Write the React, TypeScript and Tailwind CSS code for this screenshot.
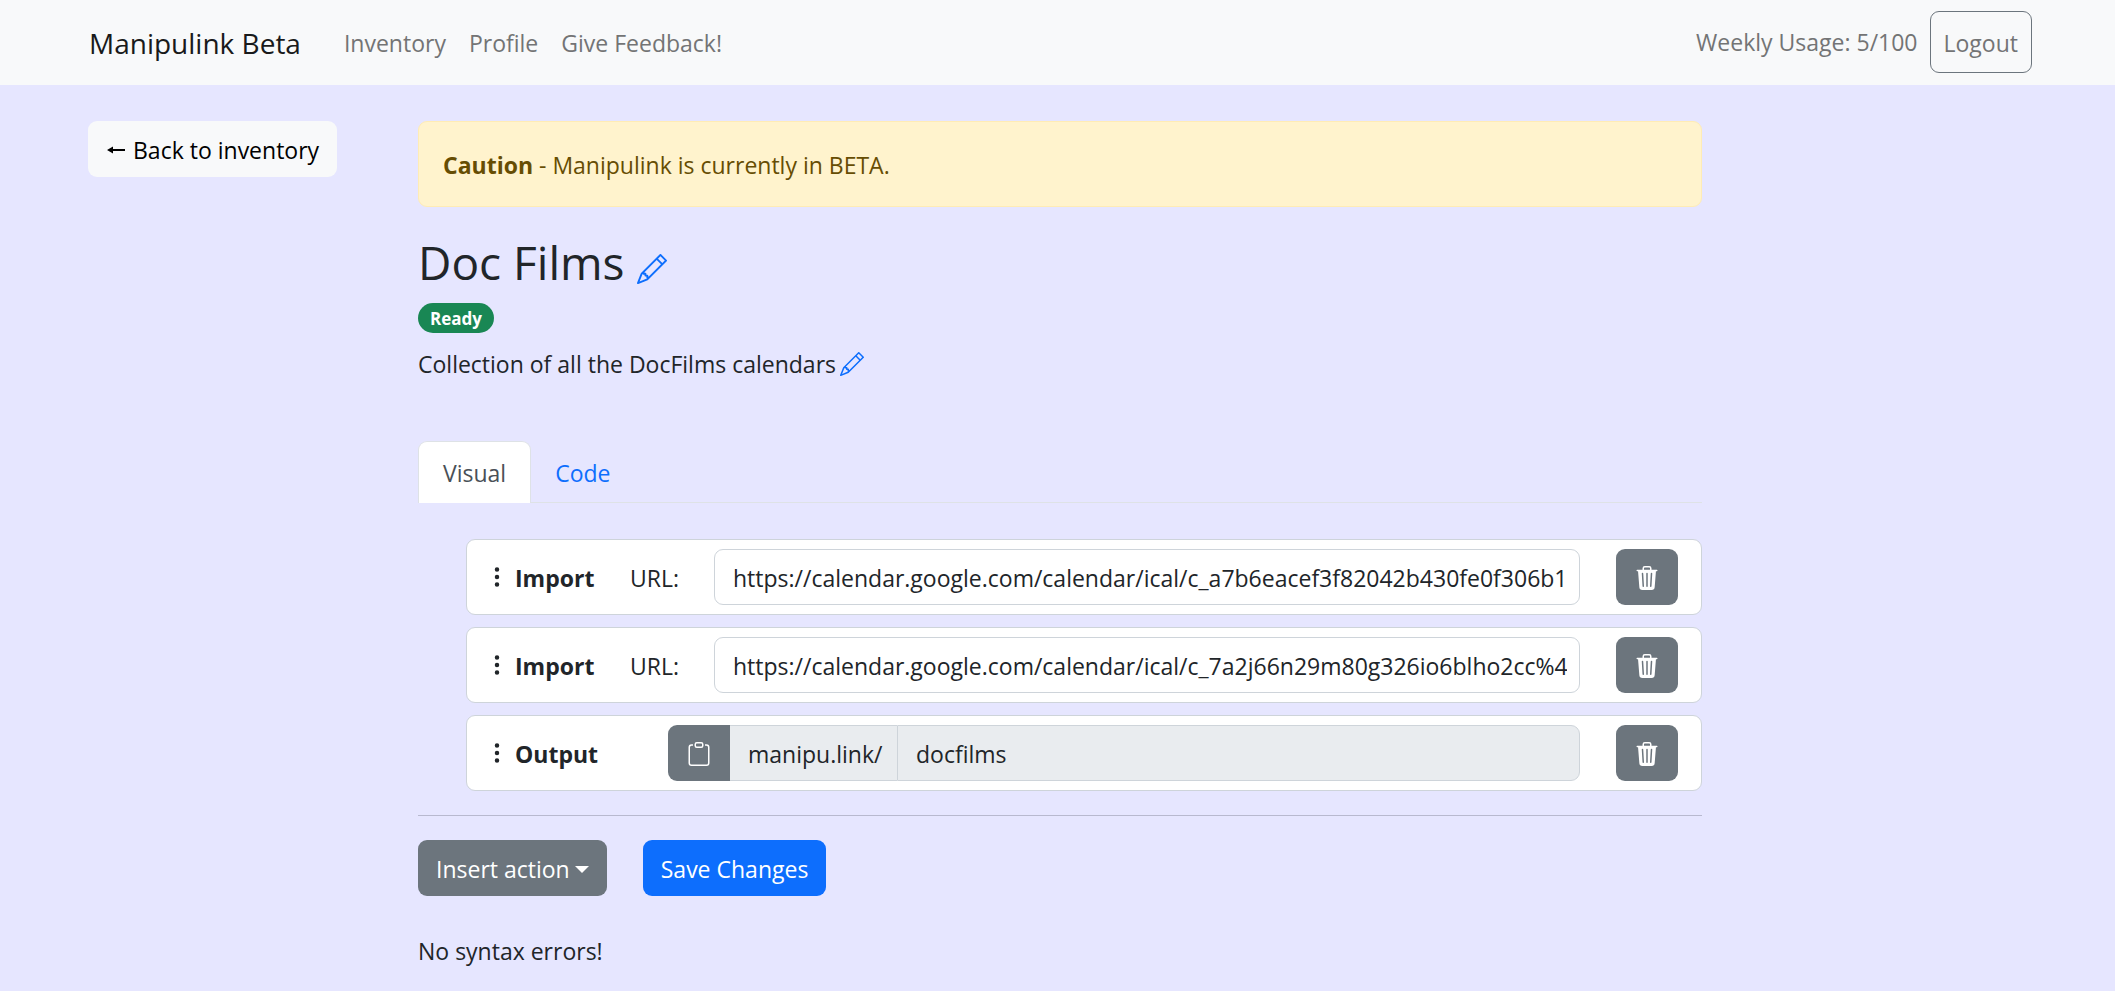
import React, { useState } from 'react';
import { BsClipboard, BsPencil, BsThreeDotsVertical, BsTrash3Fill } from 'react-icons/bs';

interface ImportAction {
  id: string;
  url: string;
}

const NAV_LINKS = ['Inventory', 'Profile', 'Give Feedback!'];

const INITIAL_IMPORTS: ImportAction[] = [
  { id: 'import-1', url: 'https://calendar.google.com/calendar/ical/c_a7b6eacef3f82042b430fe0f306b16' },
  { id: 'import-2', url: 'https://calendar.google.com/calendar/ical/c_7a2j66n29m80g326io6blho2cc%40' },
];

function Navbar(): React.ReactNode {
  return (
    <header className="bg-[#f8f9fa] pl-[5px]">
      <nav className="mx-auto flex h-[85px] max-w-[1980px] items-center px-[18px] pb-px">
        <a href="#" className="mr-[43px] pt-px pl-px text-[28px] text-[#191a1b]">Manipulink Beta</a>
        <div className="flex gap-[23px] pt-[2px] text-[#737475]">
          {NAV_LINKS.map((label) => (
            <a key={label} href="#">{label}</a>
          ))}
        </div>
        <span className="ml-auto mr-3 text-[#737475]">Weekly Usage: 5/100</span>
        <button type="button" className="h-[62px] rounded-[9px] border border-[#6c757d] px-[13px] pt-[2px] text-[#737475]">
          Logout
        </button>
      </nav>
    </header>
  );
}

function ActionRow({ name, children }: { name: string; children: React.ReactNode }): React.ReactNode {
  return (
    <li className="flex h-[76px] items-center rounded-[9px] border border-[#ced4da] bg-white pl-[18px] pr-[23px]">
      <BsThreeDotsVertical className="size-6 shrink-0" />
      <strong className="ml-[6px] w-[115px] shrink-0 pt-[2px] font-bold">{name}</strong>
      {children}
      <button
        type="button"
        aria-label={`Delete ${name}`}
        className="ml-9 flex h-14 w-[62px] shrink-0 items-center justify-center rounded-[9px] bg-[#6c757d] pt-[2px] text-white"
      >
        <BsTrash3Fill className="size-6" />
      </button>
    </li>
  );
}

export default function App(): React.ReactNode {
  const [imports, setImports] = useState<ImportAction[]>(INITIAL_IMPORTS);
  const [output, setOutput] = useState<string>('docfilms');

  const updateUrl = (id: string, url: string) => {
    setImports(imports.map((item) => (item.id === id ? { ...item, url } : item)));
  };

  return (
    <div className="min-h-screen bg-[#e6e6ff] font-['Open_Sans','Noto_Sans',sans-serif] text-[23px] leading-9 text-[#212529]">
      <Navbar />

      <div className="pl-[5px]">
        <main className="mx-auto grid max-w-[1980px] grid-cols-12 pt-9">
          <div className="col-span-2 px-[18px]">
            <button type="button" className="flex h-14 items-center gap-2 whitespace-nowrap rounded-[9px] bg-[#f8f9fa] pl-[19px] pr-[18px] pt-[2px] text-black">
              <svg viewBox="0 0 18 12" className="h-3 w-[18px]" fill="currentColor" aria-hidden="true">
                <path d="M0 6 6 2.5V5h12v2H6v2.5z" />
              </svg>
              Back to inventory
            </button>
          </div>

          <div className="col-span-8 px-[18px]">
            <div role="alert" className="mb-7 flex h-[86px] items-center rounded-[9px] border border-[#ffecb5] bg-[#fff3cd] px-6 pt-[2px] text-[#664d03]">
              <p><strong className="font-bold">Caution</strong> - Manipulink is currently in BETA.</p>
            </div>

            {/* Title and description */}
            <div className="flex h-14 items-start gap-3">
              <h1 className="text-[46px] leading-[54px]">Doc Films</h1>
              <button type="button" aria-label="Edit title" className="mt-[19px] text-[#0d6efd]">
                <BsPencil className="size-[30px]" />
              </button>
            </div>
            <span className="mt-3 flex h-[30px] w-fit items-center rounded-full bg-[#198754] px-3 pt-[2px] text-[17px] font-bold text-white">
              Ready
            </span>
            <div className="mt-[13px] flex h-9 items-center gap-1">
              <p>Collection of all the DocFilms calendars</p>
              <button type="button" aria-label="Edit description" className="text-[#0d6efd]">
                <BsPencil className="size-6" />
              </button>
            </div>

            {/* Editor tabs */}
            <div role="tablist" className="mt-[59px] flex h-[62px] border-b border-[#dee2e6]">
              <button type="button" role="tab" aria-selected="true" className="-mb-px rounded-t-[9px] border border-b-0 border-[#dee2e6] bg-white px-6 pt-px text-[#495057]">
                Visual
              </button>
              <button type="button" role="tab" aria-selected="false" className="px-6 pt-[3px] text-[#0d6efd]">
                Code
              </button>
            </div>

            <ul className="mt-9 flex flex-col gap-3 pl-12">
              {imports.map((item) => (
                <ActionRow key={item.id} name="Import">
                  <label htmlFor={item.id} className="w-[84px] shrink-0 pt-[2px]">URL:</label>
                  <input
                    id={item.id}
                    type="text"
                    value={item.url}
                    onChange={(e) => updateUrl(item.id, e.target.value)}
                    className="h-14 min-w-0 flex-1 rounded-[9px] border border-[#ced4da] bg-white pl-[18px] pr-3 pt-[2px]"
                  />
                </ActionRow>
              ))}
              <ActionRow name="Output">
                <div className="ml-[38px] flex h-14 min-w-0 flex-1">
                  <button type="button" aria-label="Copy link" className="flex w-[62px] shrink-0 items-center justify-center rounded-l-[9px] bg-[#6c757d] pt-[2px] text-white">
                    <BsClipboard className="size-6" />
                  </button>
                  <label htmlFor="output" className="flex w-[167px] shrink-0 items-center border-y border-[#ced4da] bg-[#e9ecef] px-[18px] pt-[2px]">
                    manipu.link/
                  </label>
                  <input
                    id="output"
                    type="text"
                    value={output}
                    onChange={(e) => setOutput(e.target.value)}
                    className="min-w-0 flex-1 rounded-r-[9px] border border-[#ced4da] bg-[#e9ecef] px-[18px] pt-[2px]"
                  />
                </div>
              </ActionRow>
            </ul>

            <hr className="my-6 border-[#b8b9cf]" />

            <div className="flex gap-9">
              <button type="button" className="flex h-14 items-center gap-[5px] rounded-[9px] bg-[#6c757d] px-[18px] pt-[2px] text-white">
                Insert action
                <svg viewBox="0 0 14 7" className="h-[7px] w-[14px]" fill="currentColor" aria-hidden="true">
                  <path d="M0 0h14L7 7z" />
                </svg>
              </button>
              <button type="button" className="h-14 rounded-[9px] bg-[#0d6efd] px-[18px] pt-[2px] text-white">
                Save Changes
              </button>
            </div>

            <p className="mt-[37px]">No syntax errors!</p>
          </div>
        </main>
      </div>
    </div>
  );
}
